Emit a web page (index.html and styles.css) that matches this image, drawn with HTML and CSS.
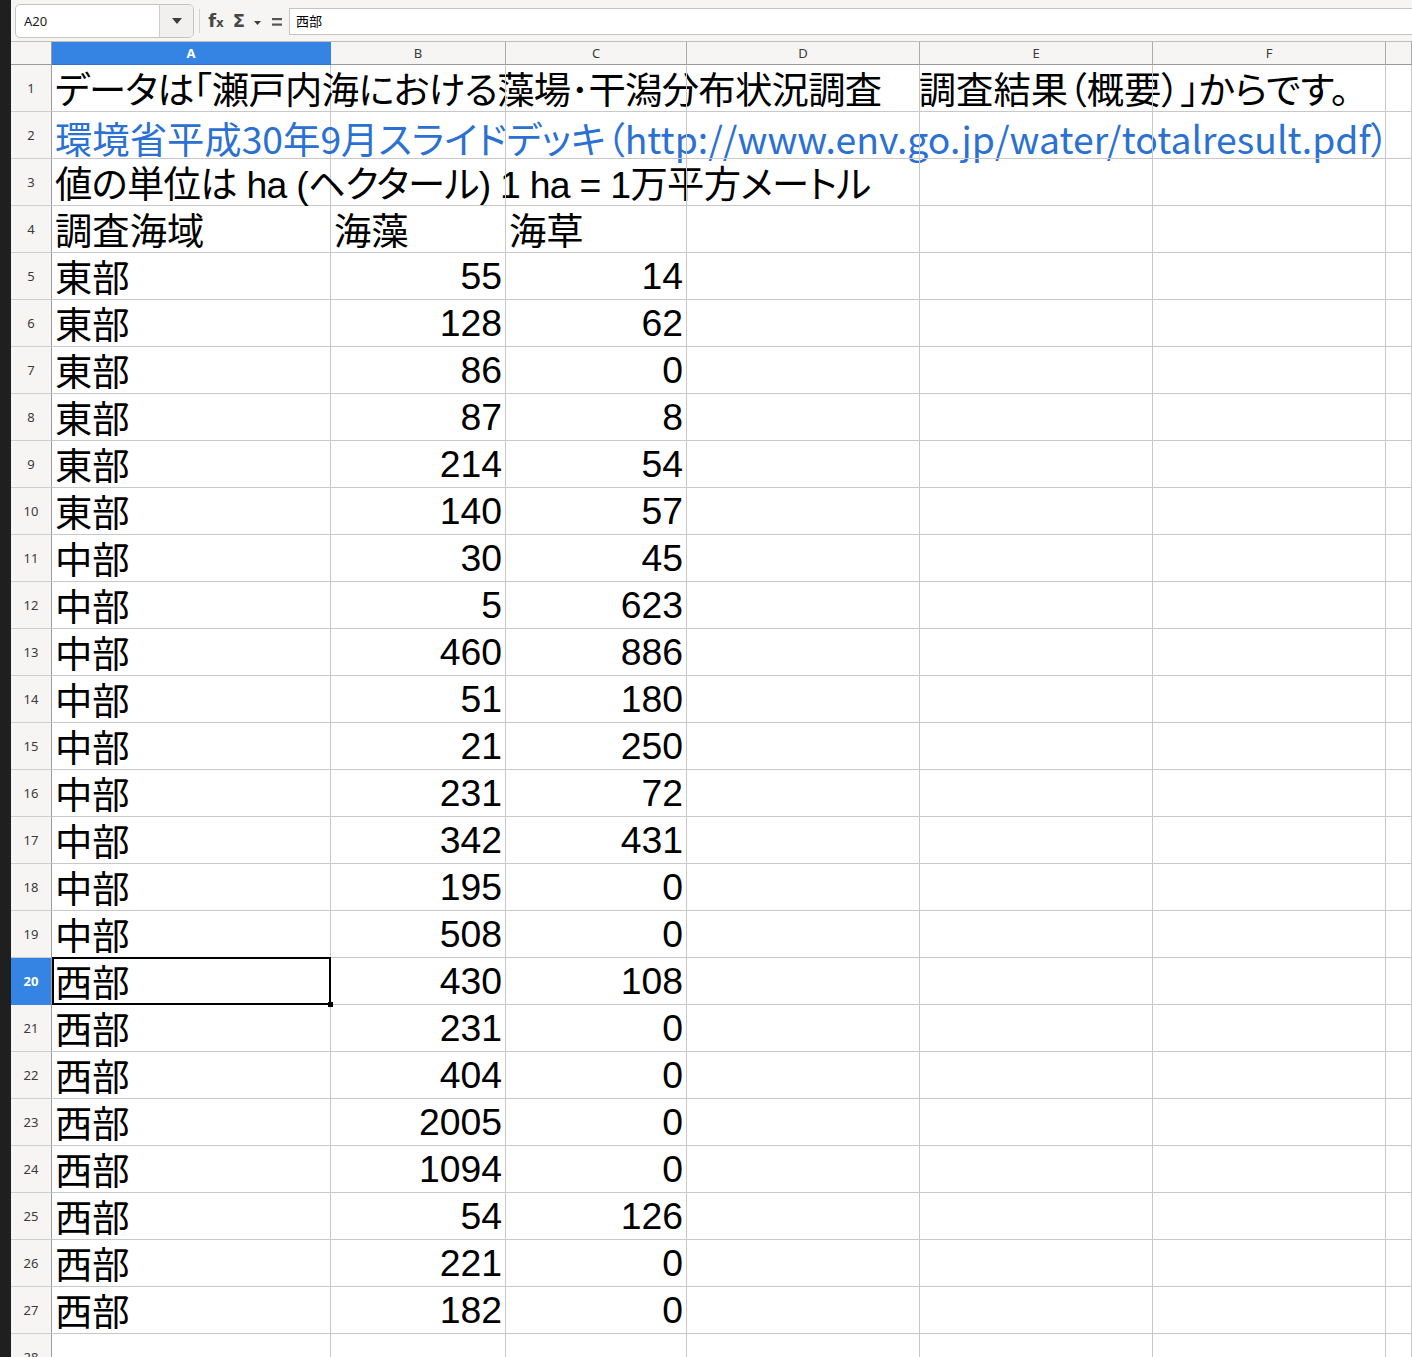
FILE: index.html
```html
<!DOCTYPE html>
<html lang="ja">
<head>
<meta charset="utf-8">
<title>Sheet</title>
<link rel="stylesheet" href="styles.css">
</head>
<body>
<div class="app">
  <div class="strip"></div>
  <div class="main">
    <div class="toolbar">
      <div class="namebox">
        <span class="namebox-text">A20</span>
        <span class="namebox-btn"><svg width="10" height="6" viewBox="0 0 10 6"><path d="M0 0h10L5 6z" fill="#3d3d3d"/></svg></span>
      </div>
      <div class="tb-sep"></div>
      <span class="tb-icon tb-fx">f<span class="tb-sub">x</span></span>
      <span class="tb-icon tb-sigma">Σ</span>
      <span class="tb-icon tb-tri"><svg width="7" height="4" viewBox="0 0 7 4"><path d="M0 0h7L3.5 4z" fill="#3d3d3d"/></svg></span>
      <span class="tb-icon tb-eq"><svg width="10" height="8" viewBox="0 0 10 8"><rect x="0" y="0" width="10" height="2.2" fill="#555"/><rect x="0" y="5.5" width="10" height="2.2" fill="#555"/></svg></span>
      <div class="formula">西部</div>
    </div>
    <div class="sheet">
      <div class="row colhead"><div class="cell rh corner"></div><div class="cell ca selhead">A</div><div class="cell cb">B</div><div class="cell cc">C</div><div class="cell cd">D</div><div class="cell ce">E</div><div class="cell cf">F</div><div class="cell cg"></div></div>
      <div class="row"><div class="cell rh">1</div><div class="cell ca txt jp"><span class="tight">データは｢瀬戸内海における藻場･干潟分布状況調査</span>　調査結果（概要）｣からです。</div><div class="cell cb"></div><div class="cell cc"></div><div class="cell cd"></div><div class="cell ce"></div><div class="cell cf"></div><div class="cell cg"></div></div>
      <div class="row"><div class="cell rh">2</div><div class="cell ca txt link">環境省平成30年9月スライドデッキ（http://www.env.go.jp/water/totalresult.pdf）</div><div class="cell cb"></div><div class="cell cc"></div><div class="cell cd"></div><div class="cell ce"></div><div class="cell cf"></div><div class="cell cg"></div></div>
      <div class="row"><div class="cell rh">3</div><div class="cell ca txt jp tight">値の単位は ha (ヘクタール) 1 ha = 1万平方メートル</div><div class="cell cb"></div><div class="cell cc"></div><div class="cell cd"></div><div class="cell ce"></div><div class="cell cf"></div><div class="cell cg"></div></div>
      <div class="row"><div class="cell rh">4</div><div class="cell ca txt">調査海域</div><div class="cell cb txt">海藻</div><div class="cell cc txt">海草</div><div class="cell cd"></div><div class="cell ce"></div><div class="cell cf"></div><div class="cell cg"></div></div>
      <div class="row"><div class="cell rh">5</div><div class="cell ca txt">東部</div><div class="cell cb num">55</div><div class="cell cc num">14</div><div class="cell cd"></div><div class="cell ce"></div><div class="cell cf"></div><div class="cell cg"></div></div>
      <div class="row"><div class="cell rh">6</div><div class="cell ca txt">東部</div><div class="cell cb num">128</div><div class="cell cc num">62</div><div class="cell cd"></div><div class="cell ce"></div><div class="cell cf"></div><div class="cell cg"></div></div>
      <div class="row"><div class="cell rh">7</div><div class="cell ca txt">東部</div><div class="cell cb num">86</div><div class="cell cc num">0</div><div class="cell cd"></div><div class="cell ce"></div><div class="cell cf"></div><div class="cell cg"></div></div>
      <div class="row"><div class="cell rh">8</div><div class="cell ca txt">東部</div><div class="cell cb num">87</div><div class="cell cc num">8</div><div class="cell cd"></div><div class="cell ce"></div><div class="cell cf"></div><div class="cell cg"></div></div>
      <div class="row"><div class="cell rh">9</div><div class="cell ca txt">東部</div><div class="cell cb num">214</div><div class="cell cc num">54</div><div class="cell cd"></div><div class="cell ce"></div><div class="cell cf"></div><div class="cell cg"></div></div>
      <div class="row"><div class="cell rh">10</div><div class="cell ca txt">東部</div><div class="cell cb num">140</div><div class="cell cc num">57</div><div class="cell cd"></div><div class="cell ce"></div><div class="cell cf"></div><div class="cell cg"></div></div>
      <div class="row"><div class="cell rh">11</div><div class="cell ca txt">中部</div><div class="cell cb num">30</div><div class="cell cc num">45</div><div class="cell cd"></div><div class="cell ce"></div><div class="cell cf"></div><div class="cell cg"></div></div>
      <div class="row"><div class="cell rh">12</div><div class="cell ca txt">中部</div><div class="cell cb num">5</div><div class="cell cc num">623</div><div class="cell cd"></div><div class="cell ce"></div><div class="cell cf"></div><div class="cell cg"></div></div>
      <div class="row"><div class="cell rh">13</div><div class="cell ca txt">中部</div><div class="cell cb num">460</div><div class="cell cc num">886</div><div class="cell cd"></div><div class="cell ce"></div><div class="cell cf"></div><div class="cell cg"></div></div>
      <div class="row"><div class="cell rh">14</div><div class="cell ca txt">中部</div><div class="cell cb num">51</div><div class="cell cc num">180</div><div class="cell cd"></div><div class="cell ce"></div><div class="cell cf"></div><div class="cell cg"></div></div>
      <div class="row"><div class="cell rh">15</div><div class="cell ca txt">中部</div><div class="cell cb num">21</div><div class="cell cc num">250</div><div class="cell cd"></div><div class="cell ce"></div><div class="cell cf"></div><div class="cell cg"></div></div>
      <div class="row"><div class="cell rh">16</div><div class="cell ca txt">中部</div><div class="cell cb num">231</div><div class="cell cc num">72</div><div class="cell cd"></div><div class="cell ce"></div><div class="cell cf"></div><div class="cell cg"></div></div>
      <div class="row"><div class="cell rh">17</div><div class="cell ca txt">中部</div><div class="cell cb num">342</div><div class="cell cc num">431</div><div class="cell cd"></div><div class="cell ce"></div><div class="cell cf"></div><div class="cell cg"></div></div>
      <div class="row"><div class="cell rh">18</div><div class="cell ca txt">中部</div><div class="cell cb num">195</div><div class="cell cc num">0</div><div class="cell cd"></div><div class="cell ce"></div><div class="cell cf"></div><div class="cell cg"></div></div>
      <div class="row"><div class="cell rh">19</div><div class="cell ca txt">中部</div><div class="cell cb num">508</div><div class="cell cc num">0</div><div class="cell cd"></div><div class="cell ce"></div><div class="cell cf"></div><div class="cell cg"></div></div>
      <div class="row"><div class="cell rh selrow">20</div><div class="cell ca txt active">西部</div><div class="cell cb num">430</div><div class="cell cc num">108</div><div class="cell cd"></div><div class="cell ce"></div><div class="cell cf"></div><div class="cell cg"></div></div>
      <div class="row"><div class="cell rh">21</div><div class="cell ca txt">西部</div><div class="cell cb num">231</div><div class="cell cc num">0</div><div class="cell cd"></div><div class="cell ce"></div><div class="cell cf"></div><div class="cell cg"></div></div>
      <div class="row"><div class="cell rh">22</div><div class="cell ca txt">西部</div><div class="cell cb num">404</div><div class="cell cc num">0</div><div class="cell cd"></div><div class="cell ce"></div><div class="cell cf"></div><div class="cell cg"></div></div>
      <div class="row"><div class="cell rh">23</div><div class="cell ca txt">西部</div><div class="cell cb num">2005</div><div class="cell cc num">0</div><div class="cell cd"></div><div class="cell ce"></div><div class="cell cf"></div><div class="cell cg"></div></div>
      <div class="row"><div class="cell rh">24</div><div class="cell ca txt">西部</div><div class="cell cb num">1094</div><div class="cell cc num">0</div><div class="cell cd"></div><div class="cell ce"></div><div class="cell cf"></div><div class="cell cg"></div></div>
      <div class="row"><div class="cell rh">25</div><div class="cell ca txt">西部</div><div class="cell cb num">54</div><div class="cell cc num">126</div><div class="cell cd"></div><div class="cell ce"></div><div class="cell cf"></div><div class="cell cg"></div></div>
      <div class="row"><div class="cell rh">26</div><div class="cell ca txt">西部</div><div class="cell cb num">221</div><div class="cell cc num">0</div><div class="cell cd"></div><div class="cell ce"></div><div class="cell cf"></div><div class="cell cg"></div></div>
      <div class="row"><div class="cell rh">27</div><div class="cell ca txt">西部</div><div class="cell cb num">182</div><div class="cell cc num">0</div><div class="cell cd"></div><div class="cell ce"></div><div class="cell cf"></div><div class="cell cg"></div></div>
      <div class="row"><div class="cell rh">28</div><div class="cell ca"></div><div class="cell cb"></div><div class="cell cc"></div><div class="cell cd"></div><div class="cell ce"></div><div class="cell cf"></div><div class="cell cg"></div></div>
    </div>
  </div>
</div>
</body>
</html>
```
FILE: styles.css
```css
html, body {
  margin: 0;
  padding: 0;
}
body {
  background: #1e1e1e;
  font-family: "Liberation Sans", "Noto Sans CJK JP", sans-serif;
}
.app {
  display: flex;
  width: 1412px;
  height: 1357px;
  overflow: hidden;
}
.strip {
  width: 11px;
  flex: none;
  background: #1f1f1f;
}
.main {
  flex: 1;
  min-width: 0;
  display: flex;
  flex-direction: column;
  background: #fff;
  overflow: hidden;
}

/* toolbar */
.toolbar {
  flex: none;
  height: 41px;
  border-bottom: 1px solid #c0bfbc;
  background: #f6f5f4;
  display: flex;
  align-items: flex-start;
  padding-left: 4px;
  font-family: "Noto Sans", "Noto Sans CJK JP", sans-serif;
}
.namebox {
  margin-top: 4px;
  width: 179px;
  height: 34px;
  box-sizing: border-box;
  border: 1px solid #c6c4c1;
  border-radius: 5px;
  background: #fff;
  display: flex;
  overflow: hidden;
}
.namebox-text {
  flex: 1;
  padding-left: 8px;
  font-size: 13px;
  line-height: 32px;
  color: #1a1a1a;
}
.namebox-btn {
  width: 33px;
  border-left: 1px solid #cfcdca;
  background: #f1f0ee;
  display: flex;
  align-items: center;
  justify-content: center;
}
.tb-sep {
  margin-left: 5px;
  margin-top: 9px;
  width: 1px;
  height: 24px;
  background: #d6d4d1;
}
.tb-icon {
  height: 41px;
  display: flex;
  align-items: center;
  justify-content: center;
  color: #474747;
  font-weight: bold;
}
.tb-fx {
  margin-left: 6px;
  width: 20px;
  font-family: "DejaVu Sans", sans-serif;
  font-size: 18px;
  align-items: baseline;
  padding-top: 10px;
  box-sizing: border-box;
  height: 41px;
}
.tb-sub {
  font-size: 12px;
}
.tb-sigma {
  margin-left: 5px;
  width: 16px;
  font-family: "DejaVu Sans", sans-serif;
  font-size: 18px;
  padding-bottom: 1px;
  box-sizing: border-box;
}
.tb-tri {
  margin-left: 5px;
  width: 11px;
  padding-top: 4px;
  box-sizing: border-box;
}
.tb-eq {
  margin-left: 5px;
  width: 18px;
  padding-top: 3px;
  box-sizing: border-box;
}
.formula {
  margin-left: 3px;
  margin-top: 8px;
  flex: 1;
  margin-right: -6px;
  height: 27px;
  box-sizing: border-box;
  border: 1px solid #c6c4c1;
  background: #fff;
  padding-left: 6px;
  font-size: 13px;
  line-height: 25px;
  color: #000;
}

/* sheet */
.sheet {
  flex: 1;
  overflow: hidden;
}
.row {
  display: flex;
  height: 47px;
}
.cell {
  flex: none;
  box-sizing: border-box;
  height: 47px;
  border-right: 1px solid #c8c8c8;
  border-bottom: 1px solid #c8c8c8;
  white-space: nowrap;
  font-size: 37.33px;
  line-height: 46px;
  color: #000;
  padding: 0 3px;
}
.rh { width: 41px; }
.ca { width: 279px; }
.cb { width: 175px; }
.cc { width: 181px; }
.cd, .ce, .cf { width: 233px; }
.cg { flex: 1; }

.txt {
  text-align: left;
  line-height: 53px;
}
.num { text-align: right; padding-right: 3px; }
.jp { font-feature-settings: "palt"; }
.tight { letter-spacing: -0.7px; }
.link {
  color: #2b70d3;
  font-family: "Noto Sans CJK JP", sans-serif;
  font-feature-settings: "palt";
}

.row .rh {
  background: #f6f5f4;
  border-right-color: #9d9d9d;
  border-bottom-color: #cfcfcf;
  font-family: "Noto Sans", sans-serif;
  font-size: 13px;
  text-align: center;
  color: #3a3a3a;
  padding: 0;
}
.row .rh.selrow {
  background: #3584e4;
  color: #fff;
  font-weight: bold;
  border-bottom-color: #3584e4;
}

.colhead {
  height: 23px;
}
.colhead .cell {
  height: 23px;
  background: #f6f5f4;
  border-right-color: #ababab;
  border-bottom-color: #9a9a9a;
  font-family: "Noto Sans", sans-serif;
  font-size: 13px;
  line-height: 22px;
  text-align: center;
  color: #3a3a3a;
  padding: 0;
}
.colhead .corner {
  border-right-color: #9d9d9d;
}
.colhead .selhead {
  background: #3584e4;
  color: #fff;
  font-weight: bold;
  border-bottom-color: #2f74cc;
  border-right-color: #3584e4;
}

.active {
  position: relative;
}
.active::after {
  content: "";
  position: absolute;
  left: 0;
  top: -1px;
  width: 279px;
  height: 48px;
  box-sizing: border-box;
  border: 2px solid #000;
}
.active::before {
  content: "";
  position: absolute;
  left: 276px;
  top: 44px;
  width: 5px;
  height: 5px;
  background: #000;
  z-index: 1;
}
```
